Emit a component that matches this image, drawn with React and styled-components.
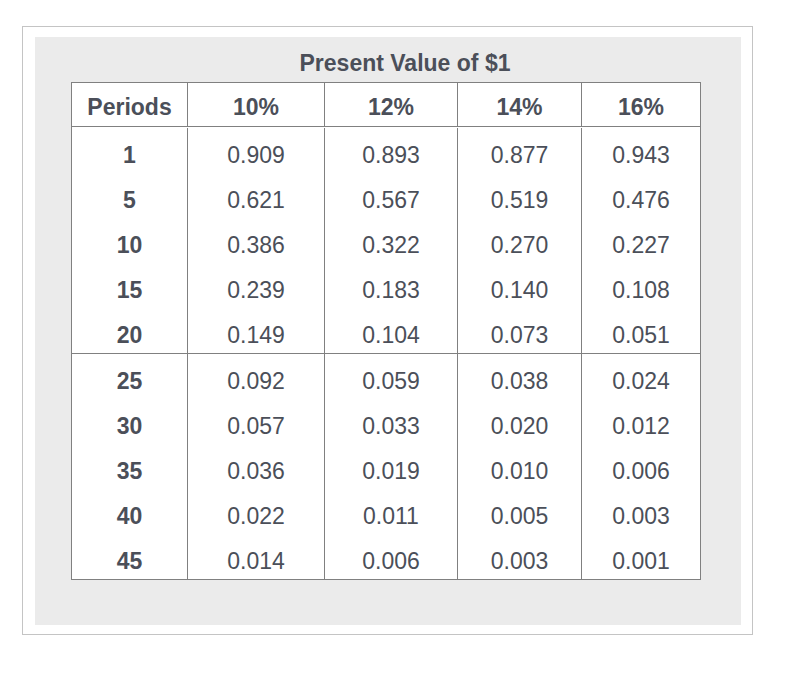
import React from "react";
import styled, { createGlobalStyle } from "styled-components";

const Global = createGlobalStyle`
  html, body { margin: 0; padding: 0; background: #ffffff; }
  body { font-family: "Liberation Sans", Arial, Helvetica, sans-serif; }
`;

const Frame = styled.div`
  box-sizing: border-box;
  margin: 26px 0 0 22px;
  width: 731px;
  height: 609px;
  border: 1px solid #c4c4c4;
  padding: 10px 11px 9px 12px;
`;

const Panel = styled.div`
  box-sizing: border-box;
  height: 100%;
  background: #ebebeb;
  padding: 13px 0 0 36px;
`;

const Title = styled.div`
  width: 630px;
  box-sizing: border-box;
  padding-left: 38px;
  text-align: center;
  font-size: 23px;
  line-height: 26px;
  font-weight: 700;
  color: #4b4f59;
  margin-bottom: 6px;
`;

const Grid = styled.div`
  box-sizing: border-box;
  width: 630px;
  border: 1px solid #808080;
  background: #ffffff;
`;

const cols = "115px 137px 133px 124px 119px";

const Row = styled.div`
  display: grid;
  grid-template-columns: ${cols};
  height: ${(p) => p.$h}px;
`;

const Group = styled.div`
  border-top: 1px solid #808080;
  padding-top: ${(p) => p.$pt || 0}px;
`;

const Cell = styled.div`
  box-sizing: border-box;
  text-align: center;
  font-size: 23px;
  line-height: 26px;
  color: #4b4f59;
  font-weight: ${(p) => (p.$bold ? 700 : 400)};
  padding-top: ${(p) => p.$pt}px;
  border-left: ${(p) => (p.$first ? "none" : "1px solid #808080")};
`;

const header = ["Periods", "10%", "12%", "14%", "16%"];
const group1 = [
  ["1", "0.909", "0.893", "0.877", "0.943"],
  ["5", "0.621", "0.567", "0.519", "0.476"],
  ["10", "0.386", "0.322", "0.270", "0.227"],
  ["15", "0.239", "0.183", "0.140", "0.108"],
  ["20", "0.149", "0.104", "0.073", "0.051"],
];
const group2 = [
  ["25", "0.092", "0.059", "0.038", "0.024"],
  ["30", "0.057", "0.033", "0.020", "0.012"],
  ["35", "0.036", "0.019", "0.010", "0.006"],
  ["40", "0.022", "0.011", "0.005", "0.003"],
  ["45", "0.014", "0.006", "0.003", "0.001"],
];

const DataRow = ({ row }) => (
  <Row $h={45}>
    {row.map((v, i) => (
      <Cell key={i} $first={i === 0} $bold={i === 0} $pt={14}>
        {v}
      </Cell>
    ))}
  </Row>
);

export default function App() {
  return (
    <>
      <Global />
      <Frame>
        <Panel>
          <Title>Present Value of $1</Title>
          <Grid>
            <Row $h={43}>
              {header.map((h, i) => (
                <Cell key={i} $first={i === 0} $bold $pt={11}>
                  {h}
                </Cell>
              ))}
            </Row>
            <Group $pt={1}>
              {group1.map((r, i) => (
                <DataRow key={i} row={r} />
              ))}
            </Group>
            <Group>
              {group2.map((r, i) => (
                <DataRow key={i} row={r} />
              ))}
            </Group>
          </Grid>
        </Panel>
      </Frame>
    </>
  );
}
